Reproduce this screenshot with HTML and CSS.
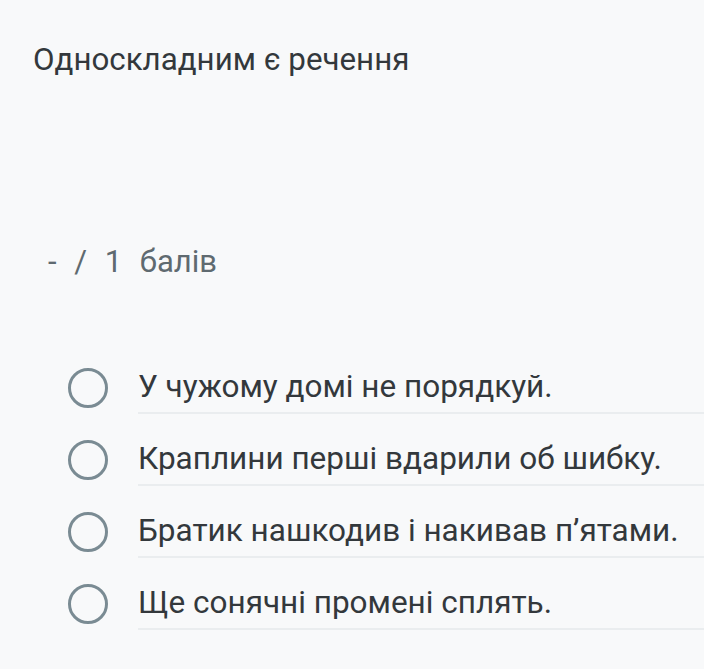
FILE: index.html
```html
<!DOCTYPE html>
<html lang="uk">
<head>
  <meta charset="UTF-8">
  <title>Питання</title>
  <link rel="stylesheet" href="styles.css">
</head>
<body>

  <div class="question">
    <h1 class="title">Односкладним є речення</h1>

    <div class="score">- / 1 балів</div>

    <ul class="options">
      <li class="option">
        <span class="radio"></span>
        <span class="label">У чужому домі не порядкуй.</span>
      </li>
      <li class="option">
        <span class="radio"></span>
        <span class="label">Краплини перші вдарили об шибку.</span>
      </li>
      <li class="option">
        <span class="radio"></span>
        <span class="label">Братик нашкодив і накивав п’ятами.</span>
      </li>
      <li class="option">
        <span class="radio"></span>
        <span class="label">Ще сонячні промені сплять.</span>
      </li>
    </ul>
  </div>

</body>
</html>
```

FILE: styles.css
```css
body {
  margin: 0;
  background: #f8f9fa;
  font-family: Roboto, "Noto Sans", sans-serif;
  color: #33383c;
}

.question {
  padding: 40px 0 0 33px;
}

.title {
  margin: 0;
  font-size: 31.3px;
  font-weight: 400;
  line-height: 40px;
}

.score {
  margin-top: 162px;
  padding-left: 15px;
  font-size: 31px;
  line-height: 40px;
  word-spacing: 10px;
  color: #5f6a70;
}

.options {
  list-style: none;
  margin: 60px 0 0;
  padding: 0;
}

.option {
  display: flex;
  align-items: center;
  padding-left: 35px;
}

.radio {
  flex: none;
  width: 34px;
  height: 34px;
  border: 3px solid #7a8b93;
  border-radius: 50%;
  margin-right: 30px;
  margin-top: 20px;
}

.label {
  flex: 1;
  font-size: 31.5px;
  line-height: 40px;
  padding: 25px 0 5px;
  border-bottom: 2px solid #eaedef;
}
```
